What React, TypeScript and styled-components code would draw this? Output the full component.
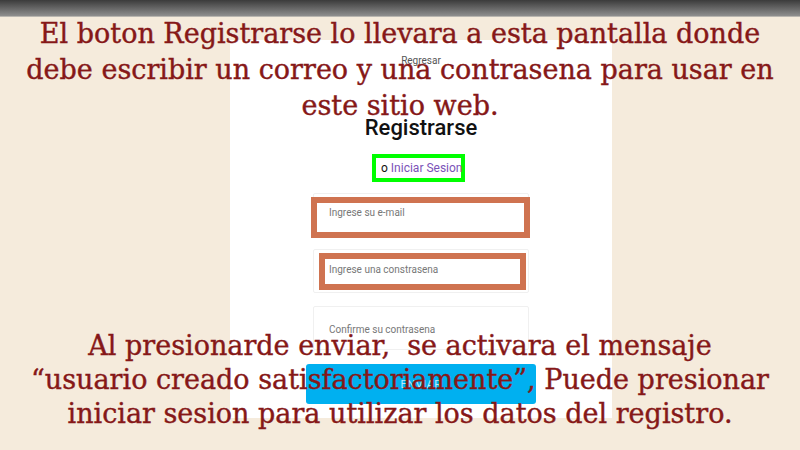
import React from "react";
import styled, { createGlobalStyle } from "styled-components";

const Global = createGlobalStyle`
  html, body { margin: 0; padding: 0; }
  body { width: 800px; height: 450px; overflow: hidden; background: #f5ebdc; }
`;

const Slide = styled.div`
  width: 800px;
  height: 450px;
  display: grid;
  grid-template-rows: 17px 1fr;
  background: #f5ebdc;
  overflow: hidden;
`;

const TopBar = styled.div`
  background: linear-gradient(#3b3b3b, #8e8e8e);
  border-bottom: 1px solid #b9b6b0;
`;

const Stage = styled.div`
  display: grid;
  grid-template-areas: "stack";
`;

const Panel = styled.div`
  grid-area: stack;
  justify-self: start;
  align-self: start;
  margin: 23px 0 0 230px;
  width: 382px;
  height: 378px;
  background: #ffffff;
  display: flex;
  flex-direction: column;
  align-items: center;
  font-family: Roboto, "Liberation Sans", sans-serif;
`;

const Back = styled.div`
  margin-top: 15px;
  font-size: 10px;
  color: #555;
  line-height: 12px;
`;

const Title = styled.div`
  margin-top: 48px;
  font-size: 22px;
  font-weight: 500;
  color: #111;
  line-height: 26px;
`;

const LoginBox = styled.div`
  margin-top: 13px;
  margin-left: -5px;
  width: 93px;
  height: 28px;
  box-sizing: border-box;
  border: 4px solid #00ff00;
  display: flex;
  align-items: center;
  padding-left: 5px;
  font-size: 12px;
  color: #111;
  white-space: nowrap;
`;

const Link = styled.span`
  color: #7b52b8;
  margin-left: 3px;
`;

const Field = styled.div<{ $top: number }>`
  position: relative;
  margin-top: ${(p) => p.$top}px;
  width: 216px;
  height: 44px;
  box-sizing: border-box;
  border: 1px solid #f0f0f0;
  border-radius: 2px;
  font-size: 10px;
  color: #777;
`;

const Placeholder = styled.div<{ $y: number }>`
  padding: ${(p) => p.$y}px 0 0 15px;
  line-height: 12px;
`;

const Highlight = styled.div<{ $x: number; $y: number; $w: number; $h: number }>`
  position: absolute;
  left: ${(p) => p.$x}px;
  top: ${(p) => p.$y}px;
  width: ${(p) => p.$w}px;
  height: ${(p) => p.$h}px;
  box-sizing: border-box;
  border: 6px solid #cf7350;
`;

const SendButton = styled.div`
  margin-top: 14px;
  width: 230px;
  height: 40px;
  background: #00b0f0;
  border-radius: 3px;
  display: flex;
  align-items: center;
  justify-content: center;
  color: rgba(255, 255, 255, 0.75);
  font-size: 11px;
  letter-spacing: 0.5px;
`;

const Caption = styled.div<{ $top?: number; $bottom?: number; $lh: number }>`
  grid-area: stack;
  align-self: ${(p) => (p.$top !== undefined ? "start" : "end")};
  margin-top: ${(p) => p.$top ?? 0}px;
  margin-bottom: ${(p) => p.$bottom ?? 0}px;
  position: relative;
  text-align: center;
  font-family: "DejaVu Serif", serif;
  font-size: 27px;
  line-height: ${(p) => p.$lh}px;
  color: #861818;
  -webkit-text-stroke: 0.4px #861818;
  white-space: nowrap;
`;

export default function App() {
  return (
    <>
      <Global />
      <Slide>
        <TopBar />
        <Stage>
          <Panel>
            <Back>Regresar</Back>
            <Title>Registrarse</Title>
            <LoginBox>
              o<Link>Iniciar Sesion</Link>
            </LoginBox>
            <Field $top={11}>
              <Placeholder $y={13}>Ingrese su e-mail</Placeholder>
              <Highlight $x={-3} $y={3} $w={219} $h={41} />
            </Field>
            <Field $top={12}>
              <Placeholder $y={14}>Ingrese una constrasena</Placeholder>
              <Highlight $x={5} $y={3} $w={207} $h={37} />
            </Field>
            <Field $top={13}>
              <Placeholder $y={17}>Confirme su contrasena</Placeholder>
            </Field>
            <SendButton>ENVIAR</SendButton>
          </Panel>
          <Caption $top={-1} $lh={36}>
            El boton Registrarse lo llevara a esta pantalla donde
            <br />
            debe escribir un correo y una contrasena para usar en
            <br />
            este sitio web.
          </Caption>
          <Caption $bottom={19} $lh={34}>
            Al presionarde enviar,&nbsp; se activara el mensaje
            <br />
            “usuario creado satisfactoriamente”, Puede presionar
            <br />
            iniciar sesion para utilizar los datos del registro.
          </Caption>
        </Stage>
      </Slide>
    </>
  );
}
